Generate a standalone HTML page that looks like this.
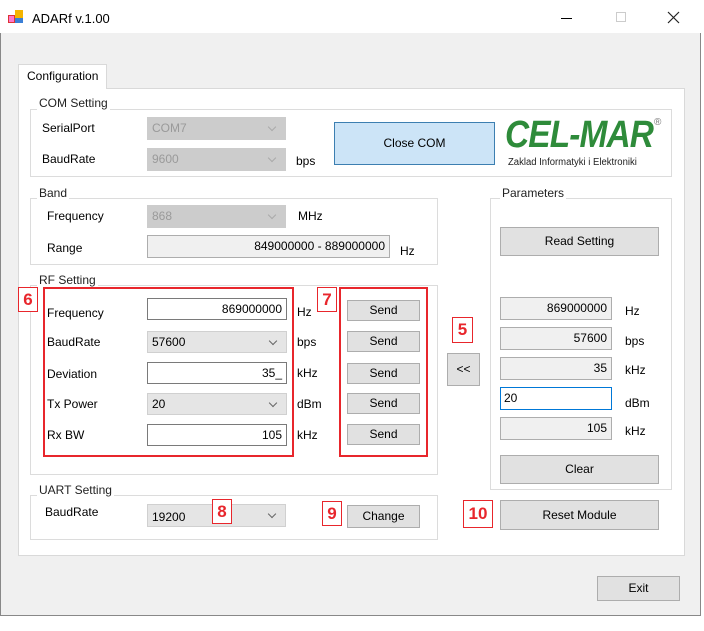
<!DOCTYPE html><html><head><style>
*{margin:0;padding:0;box-sizing:border-box}
body{width:704px;height:631px;background:#fff;font-family:"Liberation Sans",sans-serif;font-size:12px;color:#000;position:relative;overflow:hidden}
.a{position:absolute}
.win{left:0;top:0;width:701px;height:616px;background:#f0f0f0;border:1px solid #888;border-top:none}
.tb{left:0;top:0;width:701px;height:33px;background:#fff}
.grp{border:1px solid #dcdcdc;}
.gl{background:#fff;padding:0 2px;color:#222}
.cb{background:#e5e5e5;border:1px solid #d0d0d0;padding:3px 0 0 4px;font-size:12px}
.cb.dis{color:#9a9a9a;background:#ccc;border-color:#ccc}
.cb:after{content:"";position:absolute;right:10px;top:6px;width:5px;height:5px;border-right:1px solid #666;border-bottom:1px solid #666;transform:rotate(45deg)}
.cb.dis:after{border-color:#aaa}
.tx{background:#fff;border:1px solid #7a7a7a;text-align:right;padding:3px 4px 0 0}
.ro{background:#f0f0f0;border:1px solid #adadad;text-align:right;padding:3px 4px 0 0}
.bt{background:#e1e1e1;border:1px solid #adadad;text-align:center}
.red{border:2px solid #e8262c}
.rl{border:1px solid #e8262c;color:#e8262c;font-weight:bold;font-size:17px;text-align:center;background:#fff}
</style></head><body>
<div class="a win"></div>
<div class="a tb"></div>
<svg class="a" style="left:8px;top:10px" width="16" height="14"><rect x="0" y="5" width="7" height="8" fill="#d33"/><rect x="7" y="0" width="8" height="8" fill="#f4b400"/><rect x="7" y="8" width="8" height="5" fill="#3b7fd6"/><rect x="1" y="6" width="5" height="6" fill="#f7c"/></svg>
<div class="a" style="left:32px;top:11px;font-size:13px">ADARf v.1.00</div>
<div class="a" style="left:561px;top:18px;width:11px;height:1px;background:#000"></div>
<div class="a" style="left:616px;top:12px;width:10px;height:10px;border:1px solid #ccc"></div>
<svg class="a" style="left:667px;top:11px" width="13" height="13"><path d="M1 1L12 12M12 1L1 12" stroke="#222" stroke-width="1.2"/></svg>

<div class="a" style="left:18px;top:88px;width:667px;height:468px;background:#fff;border:1px solid #d9d9d9"></div>
<div class="a" style="left:18px;top:64px;width:89px;height:25px;background:#fff;border:1px solid #d9d9d9;border-bottom:none;padding:4px 0 0 8px">Configuration</div>

<div class="a grp" style="left:30px;top:109px;width:642px;height:68px"></div>
<div class="a gl" style="left:37px;top:96px">COM Setting</div>
<div class="a" style="left:42px;top:121px">SerialPort</div>
<div class="a cb dis" style="left:147px;top:117px;width:139px;height:23px">COM7</div>
<div class="a" style="left:42px;top:152px">BaudRate</div>
<div class="a cb dis" style="left:147px;top:148px;width:139px;height:23px">9600</div>
<div class="a" style="left:296px;top:154px">bps</div>
<div class="a" style="left:334px;top:122px;width:161px;height:43px;background:#cce4f7;border:1px solid #3c7fb1;text-align:center;line-height:41px">Close COM</div>
<div class="a" style="left:505px;top:114px;font-size:38px;font-weight:bold;font-style:italic;color:#2e8b3a;letter-spacing:-1px;transform:scaleX(0.88);transform-origin:left top">CEL-MAR</div>
<div class="a" style="left:654px;top:117px;font-size:10px;color:#777">®</div>
<div class="a" style="left:508px;top:157px;font-size:10px;color:#222;transform:scaleX(0.95);transform-origin:left top">Zaklad Informatyki i Elektroniki</div>

<div class="a grp" style="left:30px;top:198px;width:408px;height:67px"></div>
<div class="a gl" style="left:37px;top:186px">Band</div>
<div class="a" style="left:47px;top:209px">Frequency</div>
<div class="a cb dis" style="left:147px;top:205px;width:139px;height:23px">868</div>
<div class="a" style="left:298px;top:209px">MHz</div>
<div class="a" style="left:47px;top:241px">Range</div>
<div class="a ro" style="left:147px;top:235px;width:243px;height:23px;color:#000">849000000 - 889000000</div>
<div class="a" style="left:400px;top:244px">Hz</div>

<div class="a grp" style="left:490px;top:198px;width:182px;height:292px"></div>
<div class="a gl" style="left:500px;top:186px">Parameters</div>
<div class="a bt" style="left:500px;top:227px;width:159px;height:29px;line-height:27px">Read Setting</div>
<div class="a ro" style="left:500px;top:297px;width:112px;height:23px">869000000</div><div class="a" style="left:625px;top:304px">Hz</div>
<div class="a ro" style="left:500px;top:327px;width:112px;height:23px">57600</div><div class="a" style="left:625px;top:334px">bps</div>
<div class="a ro" style="left:500px;top:357px;width:112px;height:23px">35</div><div class="a" style="left:625px;top:363px">kHz</div>
<div class="a" style="left:500px;top:387px;width:112px;height:23px;background:#fff;border:1px solid #0078d7;padding:3px 0 0 3px">20</div><div class="a" style="left:625px;top:396px">dBm</div>
<div class="a ro" style="left:500px;top:417px;width:112px;height:23px">105</div><div class="a" style="left:625px;top:424px">kHz</div>
<div class="a bt" style="left:500px;top:455px;width:159px;height:29px;line-height:27px">Clear</div>

<div class="a grp" style="left:30px;top:285px;width:408px;height:190px"></div>
<div class="a gl" style="left:37px;top:273px">RF Setting</div>
<div class="a red" style="left:43px;top:287px;width:251px;height:170px"></div>
<div class="a rl" style="left:18px;top:287px;width:20px;height:25px;line-height:23px">6</div>
<div class="a" style="left:47px;top:306px">Frequency</div>
<div class="a tx" style="left:147px;top:298px;width:140px;height:22px">869000000</div><div class="a" style="left:297px;top:305px">Hz</div>
<div class="a" style="left:47px;top:335px">BaudRate</div>
<div class="a cb" style="left:147px;top:331px;width:140px;height:22px">57600</div><div class="a" style="left:297px;top:335px">bps</div>
<div class="a" style="left:47px;top:367px">Deviation</div>
<div class="a tx" style="left:147px;top:362px;width:140px;height:22px">35_</div><div class="a" style="left:297px;top:366px">kHz</div>
<div class="a" style="left:47px;top:397px">Tx Power</div>
<div class="a cb" style="left:147px;top:393px;width:140px;height:22px">20</div><div class="a" style="left:297px;top:397px">dBm</div>
<div class="a" style="left:47px;top:428px">Rx BW</div>
<div class="a tx" style="left:147px;top:424px;width:140px;height:22px">105</div><div class="a" style="left:297px;top:428px">kHz</div>

<div class="a red" style="left:339px;top:287px;width:89px;height:170px"></div>
<div class="a rl" style="left:317px;top:287px;width:20px;height:25px;line-height:23px">7</div>
<div class="a bt" style="left:347px;top:300px;width:73px;height:21px;line-height:19px">Send</div>
<div class="a bt" style="left:347px;top:331px;width:73px;height:21px;line-height:19px">Send</div>
<div class="a bt" style="left:347px;top:363px;width:73px;height:21px;line-height:19px">Send</div>
<div class="a bt" style="left:347px;top:393px;width:73px;height:21px;line-height:19px">Send</div>
<div class="a bt" style="left:347px;top:424px;width:73px;height:21px;line-height:19px">Send</div>

<div class="a rl" style="left:452px;top:317px;width:21px;height:26px;line-height:24px">5</div>
<div class="a bt" style="left:447px;top:353px;width:33px;height:33px;line-height:31px">&lt;&lt;</div>

<div class="a grp" style="left:30px;top:495px;width:408px;height:45px"></div>
<div class="a gl" style="left:37px;top:483px">UART Setting</div>
<div class="a" style="left:45px;top:505px">BaudRate</div>
<div class="a cb" style="left:147px;top:504px;width:139px;height:23px;padding-top:5px">19200</div>
<div class="a rl" style="left:212px;top:499px;width:20px;height:25px;line-height:23px">8</div>
<div class="a rl" style="left:322px;top:501px;width:20px;height:25px;line-height:23px">9</div>
<div class="a bt" style="left:347px;top:505px;width:73px;height:23px;line-height:21px">Change</div>
<div class="a rl" style="left:463px;top:500px;width:30px;height:28px;line-height:26px">10</div>
<div class="a bt" style="left:500px;top:500px;width:159px;height:30px;line-height:28px">Reset Module</div>

<div class="a bt" style="left:597px;top:576px;width:83px;height:25px;line-height:23px">Exit</div>
</body></html>
